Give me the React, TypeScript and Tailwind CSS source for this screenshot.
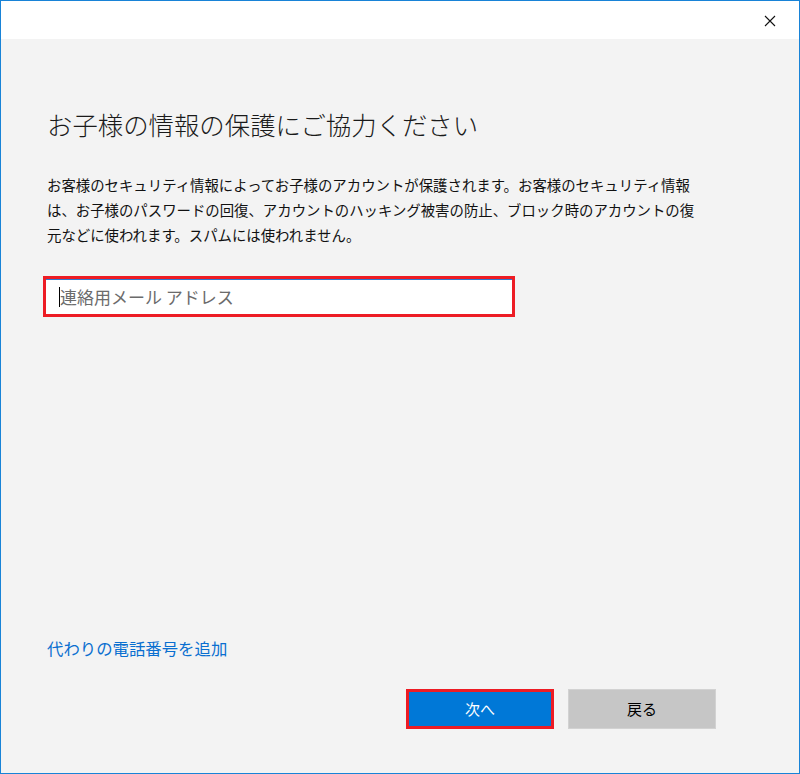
export default function App() {
  return (
    <div
      className="w-[800px] h-[774px] border border-[#1883d7] flex flex-col bg-[#f3f3f3]"
      style={{ fontFamily: '"Noto Sans CJK JP", "Noto Sans", sans-serif' }}
    >
      {/* Title bar */}
      <div className="h-[38px] bg-white flex justify-end items-center pr-[23px] shrink-0">
        <svg width="12" height="12" viewBox="0 0 12 12" className="mt-[1px]">
          <path d="M1 1 L11 11 M11 1 L1 11" stroke="#111" strokeWidth="1.1" fill="none" />
        </svg>
      </div>

      <div className="flex-1 flex flex-col pl-[46px] pt-[67px]">
        <h1 className="text-[25.4px] leading-[36px] font-light text-[#1a1a1a] tracking-[0px]">
          お子様の情報の保護にご協力ください
        </h1>

        <p className="mt-[30px] text-[14.4px] leading-[25px] text-[#111]">
          お客様のセキュリティ情報によってお子様のアカウントが保護されます。お客様のセキュリティ情報
          <br />
          は、お子様のパスワードの回復、アカウントのハッキング被害の防止、ブロック時のアカウントの復
          <br />
          元などに使われます。スパムには使われません。
        </p>

        <div className="mt-[29px] -ml-[4px] w-[472px] h-[41px] border-[3px] border-[#ed1c24] bg-white relative">
          <div className="absolute inset-x-0 top-0 h-px bg-[#2b7cd3]" />
          <input
            className="w-full h-full bg-transparent outline-none pl-[14px] text-[17px] placeholder:text-[#6b6b6b]"
            placeholder="連絡用メール アドレス"
          />
          <span className="absolute left-[13px] top-[8px] w-px h-[20px] bg-black" />
        </div>

        <div className="flex-1" />

        <a className="text-[16.4px] leading-[24px] text-[#0a6fd0] w-fit cursor-pointer">
          代わりの電話番号を追加
        </a>

        <div className="mt-[29px] mb-[44px] flex justify-end gap-[14px] pr-[83px]">
          <button className="w-[148px] h-[40px] border-[3px] border-[#ed1c24] bg-[#0078d7] text-white text-[15px]">
            次へ
          </button>
          <button className="w-[148px] h-[40px] border border-[#d2d2d2] bg-[#c6c6c6] text-black text-[15px]">
            戻る
          </button>
        </div>
      </div>
    </div>
  );
}
